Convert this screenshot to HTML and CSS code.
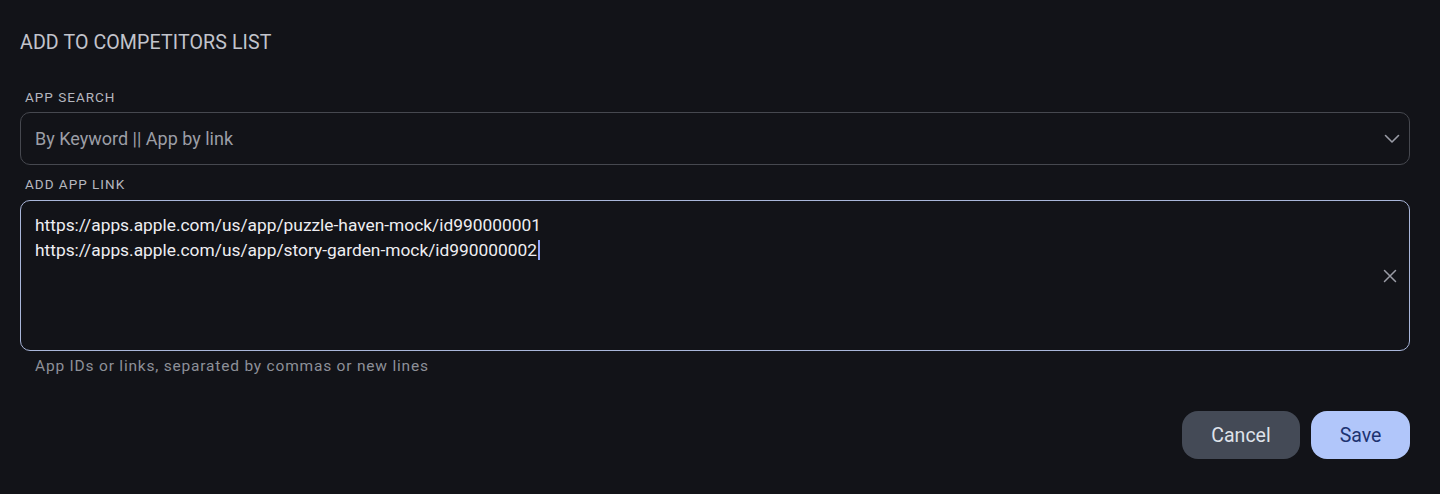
FILE: index.html
```html
<!DOCTYPE html>
<html lang="en">
<head>
<meta charset="utf-8">
<title>Add to competitors list</title>
<link rel="stylesheet" href="styles.css">
</head>
<body>
<div class="dialog">
  <h1 class="title">ADD TO COMPETITORS LIST</h1>
  <div class="field">
    <div class="label">APP SEARCH</div>
    <div class="select">
      <span class="placeholder">By Keyword || App by link</span>
      <svg class="chevron" width="16" height="10" viewBox="0 0 16 10"><path d="M1.5 1.5 L8 8 L14.5 1.5" fill="none" stroke="#9a9ca6" stroke-width="1.6" stroke-linecap="round" stroke-linejoin="round"/></svg>
    </div>
  </div>
  <div class="field field-link">
    <div class="label">ADD APP LINK</div>
    <div class="textarea">
      <div class="lines">
        <div>https://apps.apple.com/us/app/puzzle-haven-mock/id990000001</div>
        <div>https://apps.apple.com/us/app/story-garden-mock/id990000002<span class="caret"></span></div>
      </div>
      <svg class="clear" width="14" height="14" viewBox="0 0 14 14"><path d="M1.5 1.5 L12.5 12.5 M12.5 1.5 L1.5 12.5" fill="none" stroke="#9a9ca6" stroke-width="1.5" stroke-linecap="round"/></svg>
    </div>
    <div class="helper">App IDs or links, separated by commas or new lines</div>
  </div>
  <div class="actions">
    <button class="btn btn-cancel">Cancel</button>
    <button class="btn btn-save">Save</button>
  </div>
</div>
</body>
</html>
```
FILE: styles.css
```css
* { box-sizing: border-box; }
html, body { margin: 0; height: 100%; }
body {
  background: #121318;
  font-family: Roboto, "Noto Sans", "Liberation Sans", sans-serif;
  color: #e3e3e9;
}
.dialog {
  padding: 31px 30px 0 20px;
}
.title {
  margin: 0;
  font-size: 19.6px;
  line-height: 24px;
  font-weight: 400;
  color: #c2c4cc;
  letter-spacing: 0.1px;
}
.field { margin-top: 34px; }
.field-link { margin-top: 11px; }
.label {
  font-size: 13.5px;
  line-height: 16px;
  color: #b5b7bf;
  letter-spacing: 1px;
  padding-left: 5px;
  margin-bottom: 7px;
}
.field-link .label { margin-bottom: 8px; }
.select {
  height: 53px;
  border: 1px solid #46484f;
  border-radius: 10px;
  display: flex;
  align-items: center;
  justify-content: space-between;
  padding: 0 9px 0 14px;
}
.placeholder {
  font-size: 18px;
  color: #9c9ea6;
}
.chevron { display: block; }
.textarea {
  height: 151px;
  border: 1.5px solid #a9b6da;
  border-radius: 10px;
  display: flex;
  align-items: center;
  justify-content: space-between;
  padding: 0 12px 0 14px;
  position: relative;
}
.lines {
  align-self: flex-start;
  padding-top: 12px;
  font-size: 17.35px;
  line-height: 25px;
  color: #eeeef2;
}
.caret {
  display: inline-block;
  width: 1.5px;
  height: 20px;
  background: #8fa6ff;
  vertical-align: -4px;
  margin-left: 1px;
}
.clear { display: block; }
.helper {
  margin-top: 5px;
  padding-left: 15px;
  font-size: 15.5px;
  line-height: 20px;
  color: #8d9098;
  letter-spacing: 0.8px;
}
.actions {
  margin-top: 35px;
  display: flex;
  justify-content: flex-end;
  gap: 11px;
}
.btn {
  height: 48px;
  border: none;
  border-radius: 16px;
  font-family: inherit;
  font-size: 19.5px;
  cursor: pointer;
}
.btn-cancel {
  width: 118px;
  background: #444a56;
  color: #dfe2ea;
}
.btn-save {
  width: 99px;
  background: #b1c6fa;
  color: #1d3371;
}
```
